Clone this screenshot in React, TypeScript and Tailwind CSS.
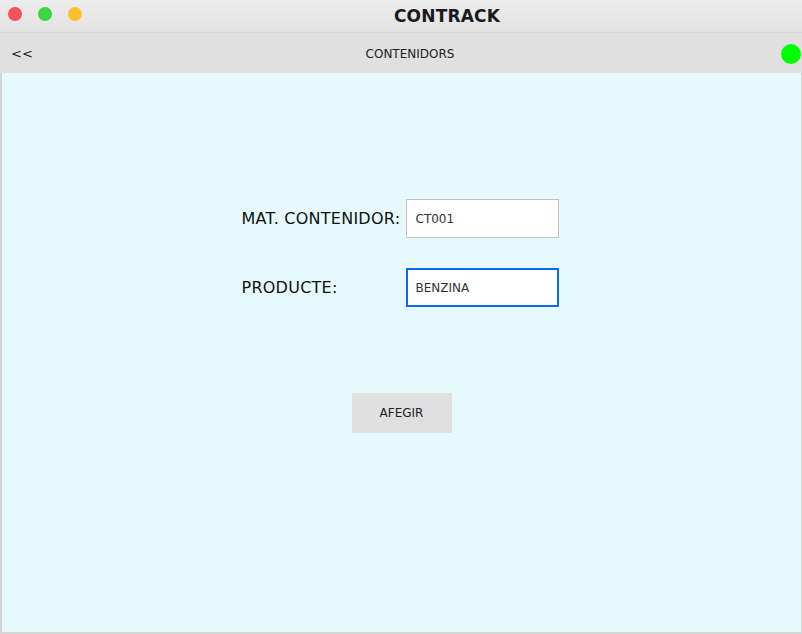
import * as React from "react";

const font = { fontFamily: '"DejaVu Sans", "Liberation Sans", sans-serif' };

function TitleBar() {
  return (
    <div className="h-[33px] flex items-center relative bg-gradient-to-b from-[#ededed] to-[#e2e2e2] border-b border-[#d6d6d6]">
      <div className="flex items-center gap-[16px] pl-[8px] pb-[4px]">
        <span className="w-[14px] h-[14px] rounded-full bg-[#f5515a]" />
        <span className="w-[14px] h-[14px] rounded-full bg-[#3bd640]" />
        <span className="w-[14px] h-[14px] rounded-full bg-[#fdbf2e]" />
      </div>
      <div className="flex-1 flex justify-center pl-[10px] pt-[2px]">
        <span className="text-[17px] font-bold text-[#1a1a1a] tracking-[0.2px]">CONTRACK</span>
      </div>
    </div>
  );
}

function Toolbar() {
  return (
    <div className="h-[40px] flex items-center bg-[#e0e0e0] pl-[11px] pt-[1px]">
      <span className="text-[13px] text-[#222] w-[40px]">&lt;&lt;</span>
      <div className="flex-1 flex justify-center pr-[12px]">
        <span className="text-[12px] text-[#222]">CONTENIDORS</span>
      </div>
      <span className="w-[20px] h-[20px] rounded-full bg-[#00ff00] mr-[1px]" />
    </div>
  );
}

export default function App() {
  const [mat, setMat] = React.useState("CT001");
  const [prod, setProd] = React.useState("BENZINA");

  return (
    <div className="w-[802px] h-[634px] flex flex-col bg-[#e0e0e0] overflow-hidden" style={font}>
      <TitleBar />
      <Toolbar />
      <div className="flex-1 flex flex-col items-center bg-[#e6f9fd] border-l-2 border-r border-b-2 border-[#d4d4d4] pt-[126px]">
        <div className="grid grid-cols-[164px_153px] gap-y-[30px] items-center mr-[3px]">
          <label className="text-[16px] text-[#111] tracking-[0.25px]">MAT. CONTENIDOR:</label>
          <input
            value={mat}
            onChange={(e) => setMat(e.target.value)}
            className="h-[39px] w-[153px] bg-white border border-[#c2c2c2] px-[9px] text-[12px] text-[#333] outline-none"
          />
          <label className="text-[16px] text-[#111] tracking-[0.25px]">PRODUCTE:</label>
          <input
            value={prod}
            onChange={(e) => setProd(e.target.value)}
            className="h-[39px] w-[153px] bg-white border-2 border-[#0a68f5] px-[8px] text-[12px] text-[#333] outline-none"
          />
        </div>
        <button className="mt-[86px] w-[100px] h-[40px] bg-[#e0e0e0] text-[12px] text-[#222]">
          AFEGIR
        </button>
      </div>
    </div>
  );
}
